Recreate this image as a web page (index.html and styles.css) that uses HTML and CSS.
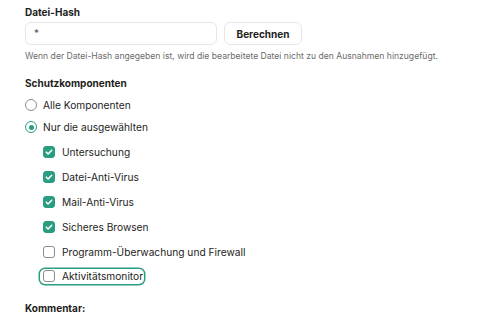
FILE: index.html
```html
<!DOCTYPE html>
<html lang="de">
<head>
    <meta charset="UTF-8">
    <meta name="viewport" content="width=device-width, initial-scale=1.0">
    <title>Ausnahme bearbeiten</title>
    <link rel="stylesheet" href="styles.css">
</head>
<body>
    <div class="form">
        <div class="field-label">Datei-Hash</div>
        <div class="hash-row">
            <div class="input">*</div>
            <button class="button">Berechnen</button>
        </div>
        <div class="hint">Wenn der Datei-Hash angegeben ist, wird die bearbeitete Datei nicht zu den Ausnahmen hinzugefügt.</div>

        <div class="section-title">Schutzkomponenten</div>
        <div class="radio-list">
            <label class="option">
                <span class="radio"></span>
                Alle Komponenten
            </label>
            <label class="option">
                <span class="radio checked"></span>
                Nur die ausgewählten
            </label>
        </div>
        <div class="check-list">
            <div class="check-row">
                <label class="option"><span class="checkbox checked"><svg viewBox="0 0 12 12"><path d="M3.3 6.2l1.8 1.8 3.6-3.7"/></svg></span>Untersuchung</label>
            </div>
            <div class="check-row">
                <label class="option"><span class="checkbox checked"><svg viewBox="0 0 12 12"><path d="M3.3 6.2l1.8 1.8 3.6-3.7"/></svg></span>Datei-Anti-Virus</label>
            </div>
            <div class="check-row">
                <label class="option"><span class="checkbox checked"><svg viewBox="0 0 12 12"><path d="M3.3 6.2l1.8 1.8 3.6-3.7"/></svg></span>Mail-Anti-Virus</label>
            </div>
            <div class="check-row">
                <label class="option"><span class="checkbox checked"><svg viewBox="0 0 12 12"><path d="M3.3 6.2l1.8 1.8 3.6-3.7"/></svg></span>Sicheres Browsen</label>
            </div>
            <div class="check-row">
                <label class="option"><span class="checkbox"></span>Programm-Überwachung und Firewall</label>
            </div>
            <div class="check-row">
                <label class="option focused"><span class="checkbox"></span>Aktivitätsmonitor</label>
            </div>
        </div>

        <div class="section-title comment">Kommentar:</div>
    </div>
</body>
</html>
```

FILE: styles.css
```css
body {
    margin: 0;
    background-color: #fff;
    color: #1d1d1b;
    font-family: Inter, "Noto Sans", sans-serif;
}
.form {
    padding-left: 25px;
}
.field-label,
.section-title {
    font-size: 10px;
    font-weight: 700;
    line-height: 14px;
    margin-top: 5px;
}
.section-title {
    margin-top: 14px;
}
.section-title.comment {
    margin-top: 12px;
}
.hash-row {
    display: flex;
    gap: 7px;
    margin-top: 3px;
    height: 23px;
}
.input {
    width: 192px;
    border: 1px solid #e6e6e6;
    border-radius: 6px;
    font-size: 10px;
    line-height: 21px;
    padding-left: 8px;
    box-sizing: border-box;
    color: #555;
}
.button {
    width: 78px;
    border: 1px solid #e6e6e6;
    border-radius: 6px;
    background-color: #fff;
    font-family: inherit;
    font-size: 10px;
    font-weight: 700;
    color: #1d1d1b;
    padding: 0;
}
.hint {
    font-size: 8.6px;
    line-height: 12px;
    margin-top: 5px;
    color: #6b6b6b;
}
.radio-list {
    display: flex;
    flex-direction: column;
    align-items: flex-start;
    margin-top: 4px;
}
.option {
    display: inline-flex;
    align-items: center;
    font-size: 10.2px;
    height: 22px;
    gap: 6px;
}
.radio {
    width: 12px;
    height: 12px;
    border: 1px solid #8c8c8c;
    border-radius: 50%;
    box-sizing: border-box;
    display: flex;
    align-items: center;
    justify-content: center;
}
.radio.checked {
    border: 1.5px solid #2a9d80;
}
.radio.checked::after {
    content: "";
    width: 5px;
    height: 5px;
    border-radius: 50%;
    background-color: #2a9d80;
}
.check-list {
    margin-top: 2px;
    padding-left: 18px;
}
.check-row {
    height: 24.8px;
    display: flex;
    align-items: center;
}
.check-row .option {
    gap: 7px;
}
.checkbox {
    width: 12px;
    height: 12px;
    border: 1px solid #8c8c8c;
    border-radius: 3px;
    box-sizing: border-box;
}
.checkbox.checked {
    background-color: #2a9d80;
    border-color: #2a9d80;
}
.checkbox svg {
    display: block;
    width: 12px;
    height: 12px;
    margin: -1px;
    fill: none;
    stroke: #fff;
    stroke-width: 1.6;
    stroke-linecap: round;
    stroke-linejoin: round;
}
.option.focused {
    height: 15px;
    margin-left: -3px;
    padding: 0 1px 0 3px;
    border-radius: 5px;
    box-shadow: 0 0 0 1.5px #2a9d80;
}
```
